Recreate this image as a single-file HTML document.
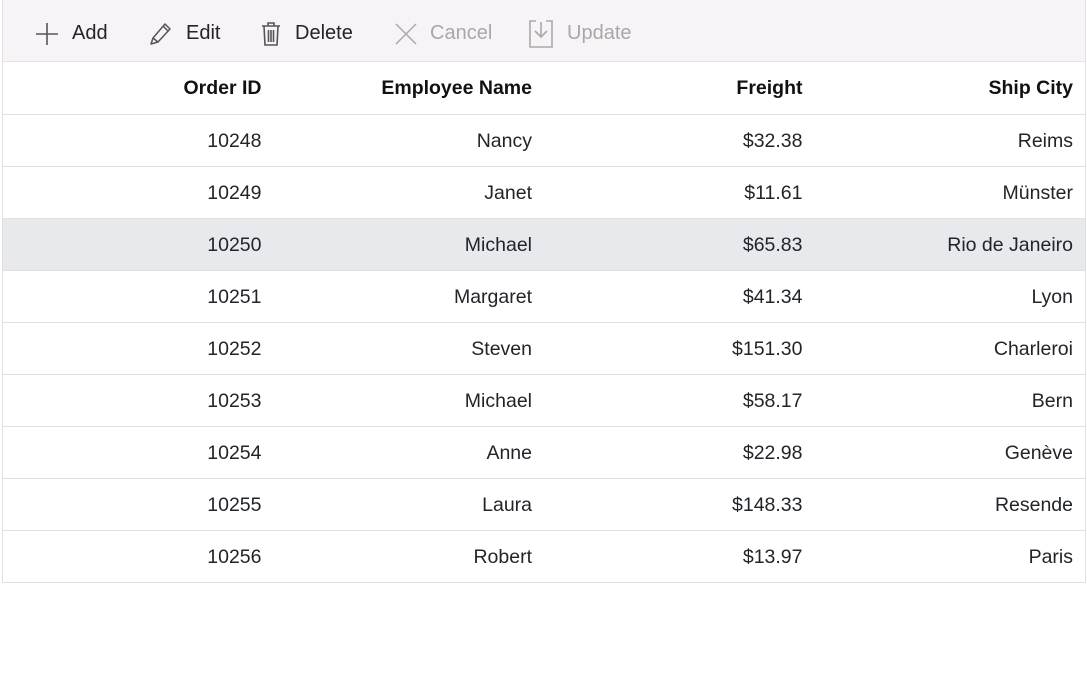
<!DOCTYPE html>
<html><head><style>
body{margin:0;width:1087px;height:698px;background:#fff;font-family:"Liberation Sans",sans-serif;overflow:hidden}
.wrap{position:absolute;left:2px;top:0;width:1082px;border:1px solid #e0e0e0;border-top:none}
.tb{height:61px;background:#f8f3f6;border-bottom:1px solid #e4e4e4;position:relative}
.btn{position:absolute;top:3px;height:61px;display:flex;align-items:center;font-size:20px;color:#212529}
.btn svg{margin-right:12px}
.dis{color:#a8a8a8}
table{border-collapse:collapse;width:1082px;table-layout:fixed}
td,th{height:52px;box-sizing:border-box;border-bottom:1px solid #e0e0e0;text-align:right;padding:3px 12px 0 0;font-size:19.5px;color:#212529}
tr:last-child td{border-bottom:none}
th{font-weight:bold;font-size:19.5px;color:#111;padding-top:2px}
tr.sel td{background:#e7e9ec}
</style></head><body>
<div class="wrap">
<div class="tb">
<div class="btn" style="left:31px"><svg width="26" height="26" viewBox="0 0 26 26"><path d="M13 2v22M2 13h22" stroke="#555" stroke-width="1.6" fill="none"/></svg>Add</div>
<div class="btn" style="left:143px"><svg width="28" height="28" viewBox="0 0 28 28"><path d="M5 24l2-6L19 4l5 5-12 13zM7 18l5 4M17 6l5 5" stroke="#555" stroke-width="1.5" fill="none" stroke-linejoin="round"/></svg>Edit</div>
<div class="btn" style="left:256px"><svg width="24" height="26" viewBox="0 0 24 26"><path d="M3 5h18M9 5V2h6v3M5 5l1 19h12l1-19M9.5 9v12M12 9v12M14.5 9v12" stroke="#555" stroke-width="1.6" fill="none"/></svg>Delete</div>
<div class="btn dis" style="left:391px"><svg width="24" height="24" viewBox="0 0 24 24"><path d="M2 2l20 20M22 2L2 22" stroke="#aaa" stroke-width="1.5"/></svg>Cancel</div>
<div class="btn dis" style="left:524px"><svg width="28" height="30" viewBox="0 0 28 30"><path d="M9 2H3v26h22V2h-6" stroke="#aaa" stroke-width="1.6" fill="none"/><path d="M14 3v15M8 12l6 6 6-6" stroke="#aaa" stroke-width="1.6" fill="none"/></svg>Update</div>
</div>
<table>
<tr><th>Order ID</th><th>Employee Name</th><th>Freight</th><th>Ship City</th></tr>
<tr><td>10248</td><td>Nancy</td><td>$32.38</td><td>Reims</td></tr>
<tr><td>10249</td><td>Janet</td><td>$11.61</td><td>Münster</td></tr>
<tr class="sel"><td>10250</td><td>Michael</td><td>$65.83</td><td>Rio de Janeiro</td></tr>
<tr><td>10251</td><td>Margaret</td><td>$41.34</td><td>Lyon</td></tr>
<tr><td>10252</td><td>Steven</td><td>$151.30</td><td>Charleroi</td></tr>
<tr><td>10253</td><td>Michael</td><td>$58.17</td><td>Bern</td></tr>
<tr><td>10254</td><td>Anne</td><td>$22.98</td><td>Genève</td></tr>
<tr><td>10255</td><td>Laura</td><td>$148.33</td><td>Resende</td></tr>
<tr><td>10256</td><td>Robert</td><td>$13.97</td><td>Paris</td></tr>
</table>
</div>
</body></html>
